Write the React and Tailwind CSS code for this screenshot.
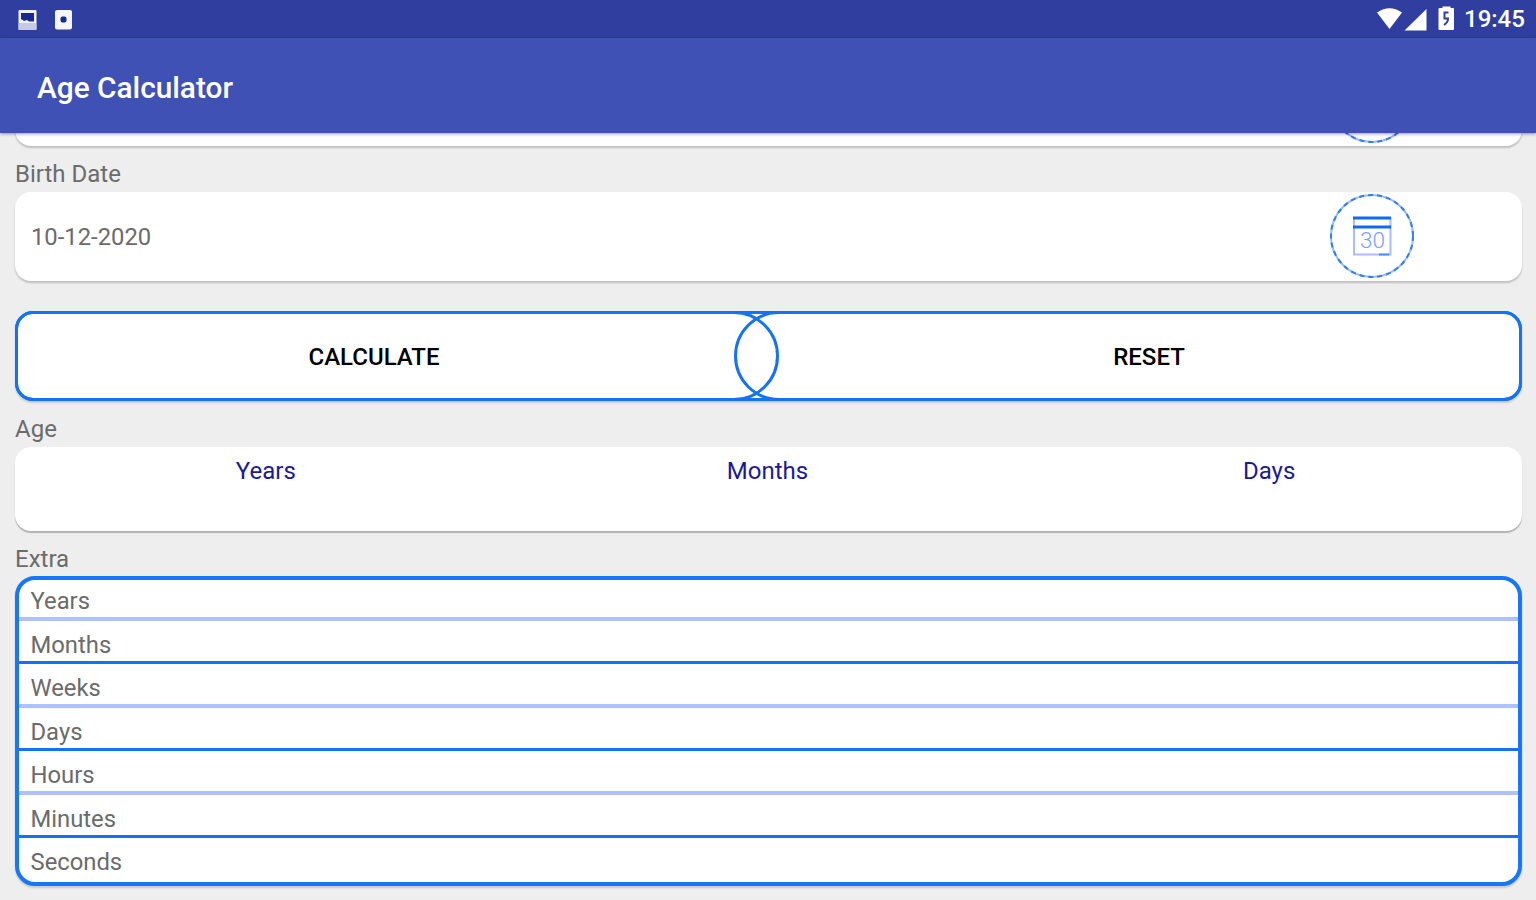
const AGE_COLUMNS = ["Years", "Months", "Days"];

const EXTRA_ROWS = [
  "Years",
  "Months",
  "Weeks",
  "Days",
  "Hours",
  "Minutes",
  "Seconds",
];

function StatusBar() {
  return (
    <div className="flex h-[38px] shrink-0 items-center justify-between bg-[#303f9f] pr-[11px] pl-[18px] text-white">
      <svg width="60" height="38" viewBox="0 0 60 38">
        <rect x="0.500" y="10" width="18" height="20" rx="1" fill="#f0f1fa" />
        <path d="M3 13h13v8.500h-5l-2-1.500-3 1-3-2z" fill="#1a2a8c" />
        <rect x="0.500" y="23" width="18" height="7" fill="#b9c1e6" opacity=".8" />
        <rect x="37" y="10" width="17" height="19.500" rx="2" fill="#f5f6fc" />
        <rect x="42.500" y="16.500" width="6" height="6" rx="2" fill="#1a2a8c" />
      </svg>
      <div className="flex items-center">
        <svg width="88" height="38" viewBox="0 0 88 38" fill="#fff">
          <path d="M1 12.500Q13.500 4 26 12.500L13.500 29z" />
          <path d="M50.500 9v21.500H28.500z" />
          <path d="M64 8h2.500V6.500h8V8H77q1 0 1 1v20q0 1-1 1H63.500q-1 0-1-1V9q0-1 1.500-1z" />
          <path
            d="M72.500 12.500h-4v6h3.500q0 4-4 6.500"
            fill="none"
            stroke="#303f9f"
            strokeWidth="2"
          />
        </svg>
        <span className="w-[61px] text-[24px] leading-[38px] font-medium whitespace-nowrap">
          19:45
        </span>
      </div>
    </div>
  );
}

function Label({ children }) {
  return (
    <div className="h-[30px] text-[24px] leading-[30px] text-[#6b6b6b]">
      {children}
    </div>
  );
}

function CalendarIcon() {
  return (
    <svg className="-mt-[2px]" width="86" height="86" viewBox="0 0 86 86" fill="none">
      <circle cx="43" cy="43" r="41" stroke="#9db8ff" strokeWidth="2" />
      <circle
        cx="43"
        cy="43"
        r="41"
        stroke="#2b7ff7"
        strokeWidth="2"
        strokeDasharray="5 4"
      />
      <path d="M25 24v37.500h36.500V24" stroke="#a9bcff" strokeWidth="2" />
      <path d="M24 25h38M24 34h38" stroke="#1169f0" strokeWidth="3" />
      <path d="M50 61.500h10" stroke="#4a92fb" strokeWidth="2" />
      <text
        x="43.500"
        y="55"
        textAnchor="middle"
        fontSize="22"
        fontWeight="300"
        textLength="25"
        lengthAdjust="spacingAndGlyphs"
        fill="#7d9cfb"
      >
        30
      </text>
    </svg>
  );
}

function DateCard({ value }) {
  return (
    <div className="flex h-[89px] shrink-0 items-center justify-between rounded-[16px] bg-white pr-[107px] pl-4 text-[23.800px] text-[#6b6b6b] shadow-[0_2px_2px_rgba(0,0,0,0.2)]">
      <span className="pt-[2px]">{value}</span>
      <CalendarIcon />
    </div>
  );
}

export default function App() {
  return (
    <div className="flex h-[900px] w-full flex-col overflow-hidden bg-[#eee] font-[Roboto,sans-serif]">
      <StatusBar />
      <header className="z-10 flex h-[95px] shrink-0 items-center bg-[#3f51b5] pt-[5px] pl-[37px] text-[29.800px] font-medium text-white shadow-[0_1px_3px_rgba(0,0,0,0.4)]">
        Age Calculator
      </header>

      <main className="flex flex-col pr-[14px] pl-[15px]">
        {/* current date card, scrolled under the header */}
        <div className="flex h-[13px] flex-col justify-end">
          <DateCard value="" />
        </div>

        <div className="pt-[13px] pb-[3px]">
          <Label>Birth Date</Label>
        </div>
        <DateCard value="10-12-2020" />

        <div className="mt-[30px] flex h-[90px] rounded-[18px] border-[3px] border-[#1473f5] bg-white text-[24px] font-medium text-black shadow-[0_2px_2px_rgba(0,0,0,0.16)]">
          <button className="-my-[3px] -ml-[3px] w-[764px] shrink-0 rounded-l-[18px] rounded-r-[45px] border-[3px] border-[#1473f5] pt-[2px] pr-[46px]">
            CALCULATE
          </button>
          <button className="-my-[3px] -mr-[3px] -ml-[45px] grow rounded-l-[45px] rounded-r-[18px] border-[3px] border-[#1473f5] pt-[2px] pl-[42px]">
            RESET
          </button>
        </div>

        <div className="pt-[13px] pb-[3px]">
          <Label>Age</Label>
        </div>
        <div className="grid h-[84px] grid-cols-3 rounded-[16px] bg-white pt-[9px] pr-[2px] text-center text-[24px] leading-[30px] text-[#1a1a96] shadow-[0_2px_1px_rgba(0,0,0,0.25)]">
          {AGE_COLUMNS.map((name) => (
            <span key={name}>{name}</span>
          ))}
        </div>

        <div className="pt-[13px] pb-[2px]">
          <Label>Extra</Label>
        </div>
        <ul className="h-[310px] overflow-hidden rounded-[20px] border-4 border-[#1677f8] bg-white text-[23.800px] text-[#6b6b6b] shadow-[0_2px_2px_rgba(0,0,0,0.16)]">
          {EXTRA_ROWS.map((name) => (
            <li
              key={name}
              className="pl-[11.500px] leading-[48px] first:leading-[42px] odd:h-[44.500px] odd:border-b-4 odd:border-[#adc0ff] even:h-[42.500px] even:border-b-[3px] even:border-[#1473f5] first:odd:h-[41px] last:odd:border-b-0"
            >
              {name}
            </li>
          ))}
        </ul>
      </main>
    </div>
  );
}
